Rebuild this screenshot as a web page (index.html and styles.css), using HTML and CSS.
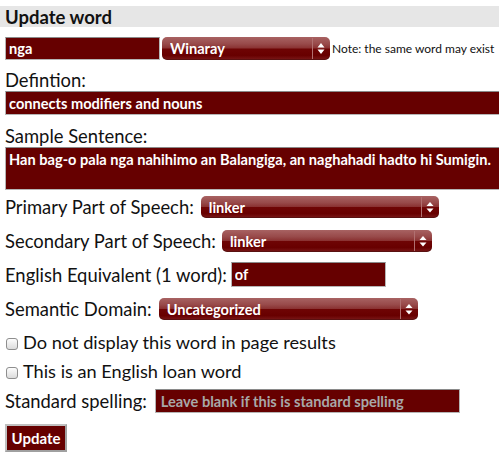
FILE: index.html
```html
<!DOCTYPE html>
<html>
<head>
<meta charset="utf-8">
<link rel="stylesheet" href="styles.css">
</head>
<body>
<h2 class="title">Update word</h2>
<form class="form">
  <div class="row first">
    <input class="field word" type="text" value="nga">
    <span class="sel sel-lang"><select><option>Winaray</option></select><svg class="arrows" width="18" height="23" viewBox="0 0 18 23"><line x1="0.5" y1="1" x2="0.5" y2="22" stroke="#b07070" stroke-width="1"/><path d="M9 6 L12.5 10.5 L5.5 10.5 Z M9 17 L12.5 12.5 L5.5 12.5 Z" fill="#fff"/></svg></span>
    <span class="note">Note: the same word may exist</span>
  </div>
  <label class="lbl lbl-def">Defintion:</label>
  <input class="field wide" type="text" value="connects modifiers and nouns">
  <label class="lbl lbl-sample">Sample Sentence:</label>
  <textarea class="field area">Han bag-o pala nga nahihimo an Balangiga, an naghahadi hadto hi Sumigin.</textarea>
  <div class="row r-pos1">
    <span class="lbl-in">Primary Part of Speech:</span>
    <span class="sel sel-pos1"><select><option>linker</option></select><svg class="arrows" width="18" height="22" viewBox="0 0 18 22"><line x1="0.5" y1="1" x2="0.5" y2="21" stroke="#b07070" stroke-width="1"/><path d="M9 6 L12.5 10 L5.5 10 Z M9 16.5 L12.5 12.5 L5.5 12.5 Z" fill="#fff"/></svg></span>
  </div>
  <div class="row r-pos2">
    <span class="lbl-in">Secondary Part of Speech:</span>
    <span class="sel sel-pos2"><select><option>linker</option></select><svg class="arrows" width="18" height="22" viewBox="0 0 18 22"><line x1="0.5" y1="1" x2="0.5" y2="21" stroke="#b07070" stroke-width="1"/><path d="M9 6 L12.5 10 L5.5 10 Z M9 16.5 L12.5 12.5 L5.5 12.5 Z" fill="#fff"/></svg></span>
  </div>
  <div class="row r-eng">
    <span class="lbl-in">English Equivalent (1 word):</span>
    <input class="field eng" type="text" value="of">
  </div>
  <div class="row r-dom">
    <span class="lbl-in">Semantic Domain:</span>
    <span class="sel sel-dom"><select><option>Uncategorized</option></select><svg class="arrows" width="18" height="22" viewBox="0 0 18 22"><line x1="0.5" y1="1" x2="0.5" y2="21" stroke="#b07070" stroke-width="1"/><path d="M9 6 L12.5 10 L5.5 10 Z M9 16.5 L12.5 12.5 L5.5 12.5 Z" fill="#fff"/></svg></span>
  </div>
  <label class="check c1"><span class="box"></span>Do not display this word in page results</label>
  <label class="check c2"><span class="box"></span>This is an English loan word</label>
  <div class="row r-std">
    <span class="lbl-in">Standard spelling:</span>
    <input class="field std" type="text" placeholder="Leave blank if this is standard spelling">
  </div>
  <button class="btn" type="button">Update</button>
</form>
</body>
</html>
```
FILE: styles.css
```css
* { box-sizing: border-box; }
html, body { margin: 0; padding: 0; background: #fff; overflow: hidden; }
body {
  font-family: "Lato", "Liberation Sans", sans-serif;
  color: #111;
  width: 499px;
}
.title {
  margin: 6px 0 0 0;
  height: 21px;
  line-height: 22px;
  font-size: 18.5px;
  font-weight: bold;
  background: #e6e6e6;
  padding-left: 5px;
  color: #111;
}
.form {
  display: flex;
  flex-direction: column;
  align-items: flex-start;
  padding-left: 5px;
  margin-top: 10px;
}
.row {
  display: flex;
  align-items: center;
  height: 22px;
}
.row.first { height: 23px; }
.field {
  background: #660000;
  color: #fff;
  font-family: "Lato", "Liberation Sans", sans-serif;
  font-weight: bold;
  font-size: 14.6px;
  border: 1px solid #b5b5b5;
  border-top-color: #8a8a8a;
  padding: 0 3px;
  margin: 0;
  outline: none;
}
.field::placeholder { color: #a8a8a8; }
.word { width: 155px; height: 23px; }
.wide { width: 500px; height: 24px; }
.area {
  width: 500px;
  height: 43px;
  resize: none;
  padding: 3px 3px;
  line-height: 17px;
  overflow: hidden;
}
.eng { width: 155px; height: 25px; margin-left: 4px; }
.std { width: 305px; height: 24px; margin-left: 8px; padding-left: 5px; }
.lbl {
  font-size: 18.4px;
  line-height: 22px;
  height: 22px;
}
.lbl-def { margin-top: 9px; }
.lbl-sample { margin-top: 10px; }
.lbl-in {
  font-size: 18.4px;
  line-height: 22px;
}
.r-pos1 { margin-top: 6px; }
.r-pos2 { margin-top: 12px; }
.r-eng { margin-top: 10px; height: 25px; }
.r-dom { margin-top: 11px; }
.c1 { margin-top: 11px; }
.c2 { margin-top: 7px; }
.r-std { margin-top: 7px; height: 24px; }
.note {
  font-size: 12px;
  margin-left: 2px;
  white-space: nowrap;
}
.sel {
  position: relative;
  display: inline-block;
  height: 22px;
  margin-left: 6px;
}
.sel select {
  appearance: none;
  -webkit-appearance: none;
  height: 22px;
  width: 100%;
  border: none;
  border-radius: 5px;
  margin: 0;
  padding: 0 22px 0 8px;
  color: #fff;
  font-family: "Lato", "Liberation Sans", sans-serif;
  font-weight: bold;
  font-size: 14.6px;
  background: linear-gradient(#a86262 0%, #984a4a 30%, #8a3232 48%, #6e0404 52%, #680000 80%, #7a1a1a 100%);
  box-shadow: inset 0 -1px 0 rgba(0,0,0,0.25);
  outline: none;
}
.arrows {
  position: absolute;
  right: 0;
  top: 0;
  pointer-events: none;
}
.sel-lang { width: 168px; margin-left: 2px; height: 23px; }
.sel-lang select { height: 23px; }
.sel-pos1 { width: 238px; margin-left: 7px; }
.sel-pos2 { width: 210px; }
.sel-dom { width: 259px; margin-left: 7px; }
.check {
  display: flex;
  align-items: center;
  font-size: 18.2px;
  line-height: 22px;
  height: 22px;
}
.box {
  width: 12px;
  height: 12px;
  border: 1px solid #8e8e8e;
  border-radius: 3px;
  background: linear-gradient(#fdfdfd, #dcdcdc);
  margin: 3px 5px 0 1px;
}
.btn {
  margin-top: 11px;
  width: 62px;
  height: 28px;
  background: #660000;
  color: #fff;
  font-family: "Lato", "Liberation Sans", sans-serif;
  font-weight: bold;
  font-size: 15px;
  border: 2px solid #a0a0a0;
  border-top-color: #c0c0c0;
  border-left-color: #c0c0c0;
  padding: 0;
}
```
